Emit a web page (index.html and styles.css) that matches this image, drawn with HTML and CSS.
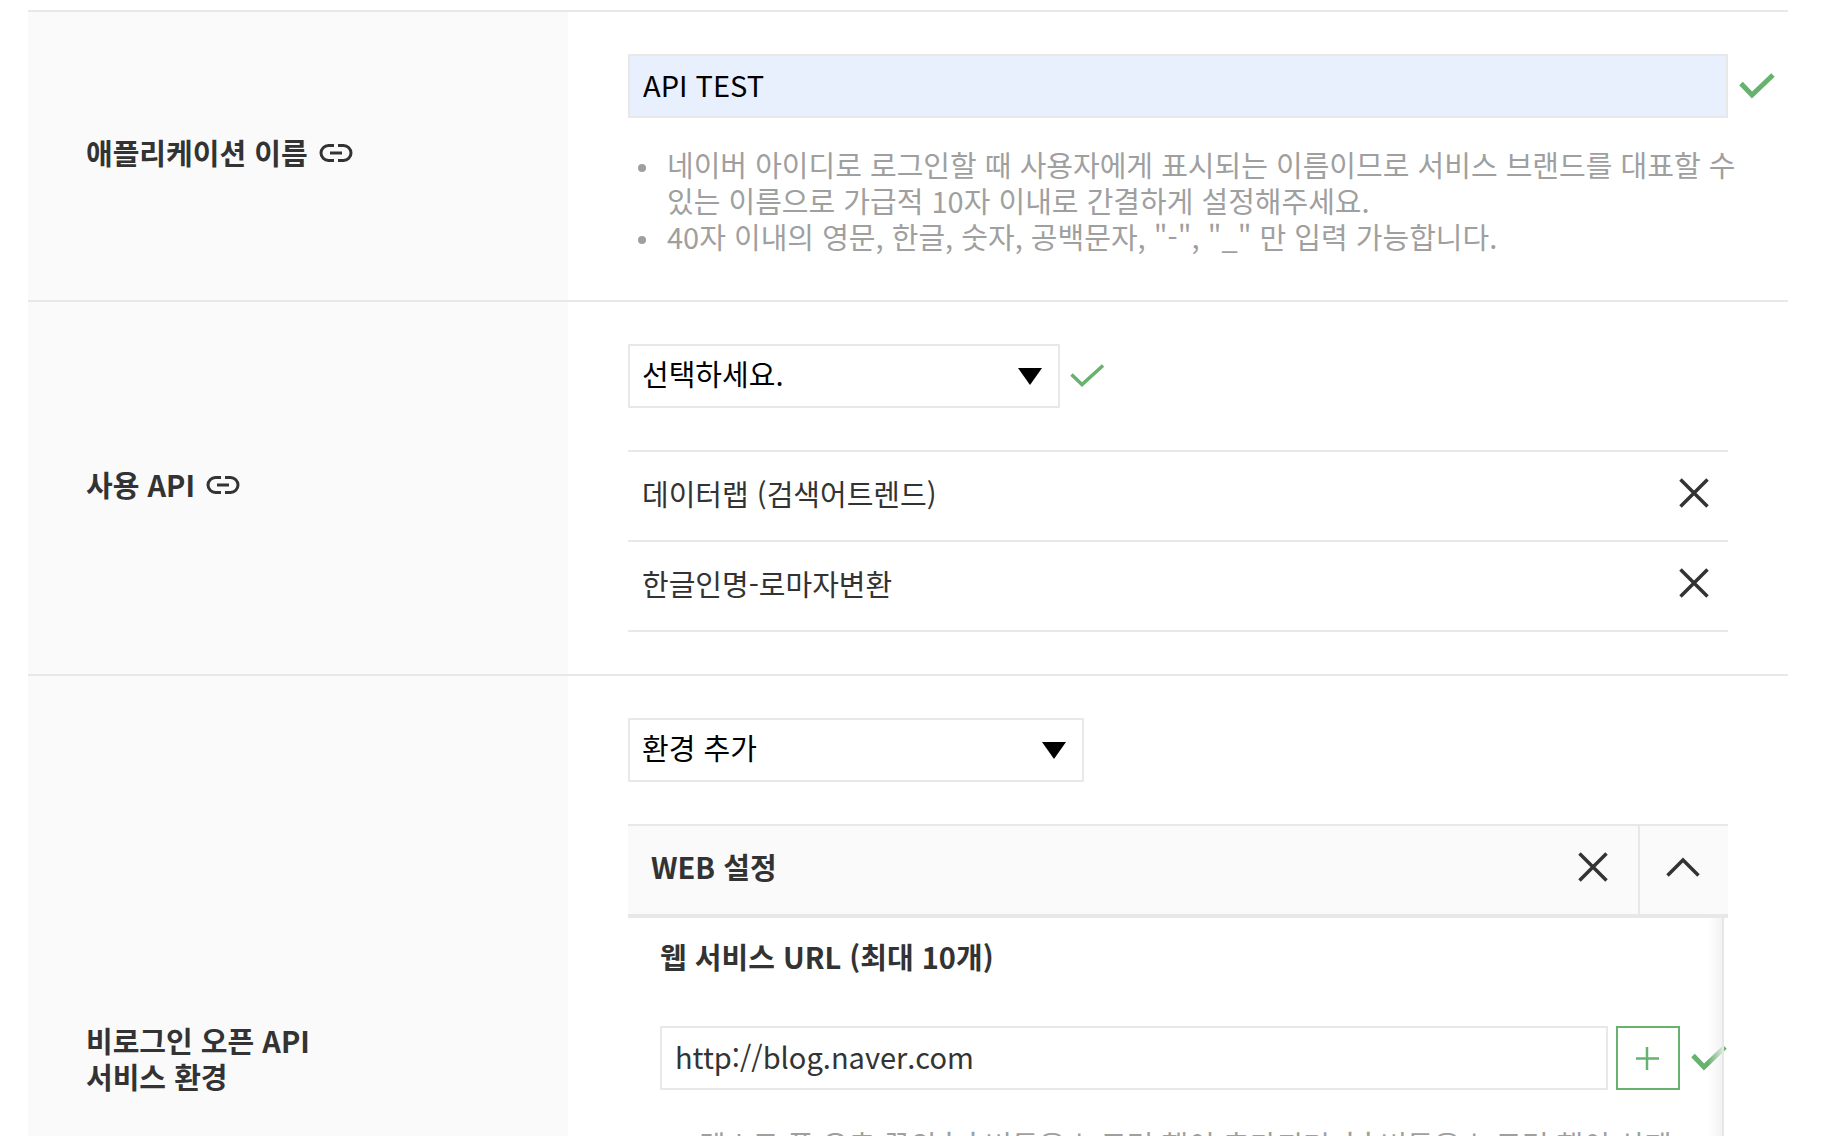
FILE: index.html
```html
<!DOCTYPE html>
<html lang="ko">
<head>
    <meta charset="UTF-8">
    <meta name="viewport" content="width=device-width, initial-scale=1.0">
    <title>애플리케이션 등록</title>
    <link rel="stylesheet" href="styles.css">
</head>
<body>
    <form class="app-form">
        <div class="row">
            <div class="row-label">
                <label for="appName">애플리케이션 이름</label>
                <a href="#name-guide" class="link-icon" aria-label="이름 안내">
                    <svg width="34" height="20" viewBox="0 0 34 20"><path d="M15 2.5H9.5a7.5 7.5 0 0 0 0 15H15M19 2.5h5.5a7.5 7.5 0 0 1 0 15H19"/><path d="M11 10h12"/></svg>
                </a>
            </div>
            <div class="row-content">
                <div class="field wide">
                    <input type="text" id="appName" class="text-input filled" value="API TEST">
                    <svg class="check" width="38" height="28" viewBox="0 0 38 28"><path d="M3 11.5l11 11.5L35 3"/></svg>
                </div>
                <ul class="notes">
                    <li>네이버 아이디로 로그인할 때 사용자에게 표시되는 이름이므로 서비스 브랜드를 대표할 수 있는 이름으로 가급적 10자 이내로 간결하게 설정해주세요.</li>
                    <li>40자 이내의 영문, 한글, 숫자, 공백문자, "-", "_" 만 입력 가능합니다.</li>
                </ul>
            </div>
        </div>

        <div class="row">
            <div class="row-label">
                <label for="apiSelect">사용 API</label>
                <a href="#api-guide" class="link-icon" aria-label="API 안내">
                    <svg width="34" height="20" viewBox="0 0 34 20"><path d="M15 2.5H9.5a7.5 7.5 0 0 0 0 15H15M19 2.5h5.5a7.5 7.5 0 0 1 0 15H19"/><path d="M11 10h12"/></svg>
                </a>
            </div>
            <div class="row-content">
                <div class="field">
                    <div class="select-box api">
                        <select id="apiSelect">
                            <option>선택하세요.</option>
                        </select>
                    </div>
                    <svg class="check thin" width="38" height="28" viewBox="0 0 38 28"><path d="M1.5 12.5l10.5 10L33 3.5"/></svg>
                </div>
                <ul class="api-list">
                    <li>
                        <span>데이터랩 (검색어트렌드)</span>
                        <button type="button" class="icon-btn" aria-label="삭제">
                            <svg width="30" height="30" viewBox="0 0 30 30"><path d="M1.500 1.500l27 27M28.500 1.500l-27 27"/></svg>
                        </button>
                    </li>
                    <li>
                        <span>한글인명-로마자변환</span>
                        <button type="button" class="icon-btn" aria-label="삭제">
                            <svg width="30" height="30" viewBox="0 0 30 30"><path d="M1.500 1.500l27 27M28.500 1.500l-27 27"/></svg>
                        </button>
                    </li>
                </ul>
            </div>
        </div>

        <div class="row env-row">
            <div class="row-label">
                <label for="envSelect">비로그인 오픈 API<br>서비스 환경</label>
            </div>
            <div class="row-content">
                <div class="field">
                    <div class="select-box env">
                        <select id="envSelect">
                            <option>환경 추가</option>
                        </select>
                    </div>
                </div>
                <section class="panel">
                    <div class="panel-head">
                        <h2>WEB 설정</h2>
                        <button type="button" class="icon-btn" aria-label="삭제">
                            <svg width="30" height="30" viewBox="0 0 30 30"><path d="M1.500 1.500l27 27M28.500 1.500l-27 27"/></svg>
                        </button>
                        <button type="button" class="icon-btn toggle" aria-label="접기">
                            <svg width="34" height="20" viewBox="0 0 34 20"><path d="M1.500 18.500L17 3l15.500 15.500"/></svg>
                        </button>
                    </div>
                    <div class="panel-body">
                        <label for="webUrl" class="panel-title">웹 서비스 URL (최대 10개)</label>
                        <div class="field">
                            <input type="text" id="webUrl" class="text-input" value="http://blog.naver.com">
                            <button type="button" class="add-btn" aria-label="추가">
                                <svg width="24" height="24" viewBox="0 0 24 24"><path d="M11 1v23M0 12.500h23"/></svg>
                            </button>
                            <svg class="check" width="38" height="28" viewBox="0 0 38 28"><path d="M3 11.5l11 11.5L35 3"/></svg>
                        </div>
                        <ul class="notes">
                            <li>텍스트 폼 우측 끝의 '+' 버튼을 누르면 행이 추가되며, '-' 버튼을 누르면 행이 삭제됩니다.</li>
                        </ul>
                        <div class="scroll-track"></div>
                    </div>
                </section>
            </div>
        </div>
    </form>
</body>
</html>
```

FILE: styles.css
```css
* {
    box-sizing: border-box;
}

body {
    margin: 0;
    height: 100vh;
    overflow: hidden;
    background: #fff;
    color: #333;
    font-family: "Noto Sans CJK KR", sans-serif;
    font-size: 29px;
    line-height: 36px;
}

ul {
    margin: 0;
    padding: 0;
}

input,
select,
button {
    font: inherit;
    border-radius: 0;
}

svg {
    display: block;
    flex: none;
    fill: none;
    stroke: #333;
    stroke-width: 3.5;
}

.app-form {
    padding: 10px 34px 0 28px;
}

.row {
    display: flex;
    border-top: 2px solid #e8e8e8;
}

.env-row {
    min-height: 774px;
}

.row-label {
    flex: 0 0 540px;
    display: flex;
    align-items: center;
    gap: 11px;
    padding: 0 58px 8px;
    background: #fafafa;
    font-weight: bold;
}

.link-icon {
    padding-top: 2px;
}

.link-icon svg {
    stroke-width: 3;
}

.row-content {
    flex: 1;
    min-width: 0;
    padding: 42px 60px;
}

.field {
    display: flex;
    align-items: center;
    gap: 10px;
}

/* the check mark hangs in the right padding of the row */
.field.wide {
    margin-right: -48px;
}

.text-input {
    flex: 1;
    min-width: 0;
    height: 64px;
    padding: 0 13px 4px;
    border: 2px solid #e8e8e8;
    background: #fff;
    color: #333;
}

.text-input.filled {
    background: #e8effd;
    color: #000;
}

.check {
    stroke: #66b26e;
    stroke-width: 5;
}

.check.thin {
    stroke-width: 3.5;
}

.notes {
    padding-left: 39px;
    color: #9f9f9f;
    word-break: break-all;
}

.row-content > .notes {
    margin: 28px -10px 4px 0;
}

.notes li {
    list-style: none;
    position: relative;
}

.notes li::before {
    content: "";
    position: absolute;
    left: -29px;
    top: 18px;
    width: 8px;
    height: 8px;
    border-radius: 50%;
    background: #9f9f9f;
}

.select-box {
    position: relative;
}

.select-box.api {
    width: 432px;
}

.select-box.env {
    width: 456px;
}

.select-box select {
    appearance: none;
    display: block;
    width: 100%;
    height: 64px;
    padding: 0 60px 6px 12px;
    border: 2px solid #e8e8e8;
    background: #fff;
    color: #000;
}

.select-box::after {
    content: "";
    position: absolute;
    right: 18px;
    top: 24px;
    border: 12px solid transparent;
    border-top: 17px solid #000;
    border-bottom: 0;
    pointer-events: none;
}

.api-list {
    margin-top: 42px;
    border-top: 2px solid #e8e8e8;
    list-style: none;
}

.api-list li {
    display: flex;
    align-items: center;
    justify-content: space-between;
    height: 90px;
    padding: 0 19px 6px 14px;
    border-bottom: 2px solid #e8e8e8;
}

.icon-btn {
    padding: 0;
    border: 0;
    background: none;
    cursor: pointer;
}

.panel {
    margin-top: 42px;
}

.panel-head {
    display: flex;
    align-items: center;
    height: 94px;
    border-top: 2px solid #e8e8e8;
    border-bottom: 4px solid #e6e8ea;
    background: #fafafa;
}

.panel-head h2 {
    flex: 1;
    margin: 0;
    padding: 0 0 8px 23px;
    font-size: 29px;
}

.panel-head .icon-btn {
    padding: 0 30px 6px;
}

.panel-head .toggle {
    display: flex;
    align-items: center;
    height: 100%;
    padding: 0 28px 6px 26px;
    border-left: 2px solid #e8e8e8;
}

.panel-body {
    position: relative;
    padding: 20px 0 0 32px;
}

.panel-title {
    display: block;
    margin-bottom: 52px;
    font-weight: bold;
}

.panel-body .notes {
    margin: 36px 52px 0 0;
}

.add-btn {
    display: flex;
    align-items: center;
    justify-content: center;
    width: 64px;
    height: 64px;
    margin-left: -2px;
    padding: 0;
    border: 2px solid #66b26e;
    background: #fff;
    cursor: pointer;
}

.add-btn svg {
    stroke: #66b26e;
    stroke-width: 2.5;
}

.scroll-track {
    position: absolute;
    top: 0;
    right: 4px;
    bottom: 0;
    width: 16px;
    border-right: 2px solid #e6e6e6;
    background: linear-gradient(to right, rgba(250, 250, 250, 0), rgba(240, 240, 240, 0.8));
}
```
